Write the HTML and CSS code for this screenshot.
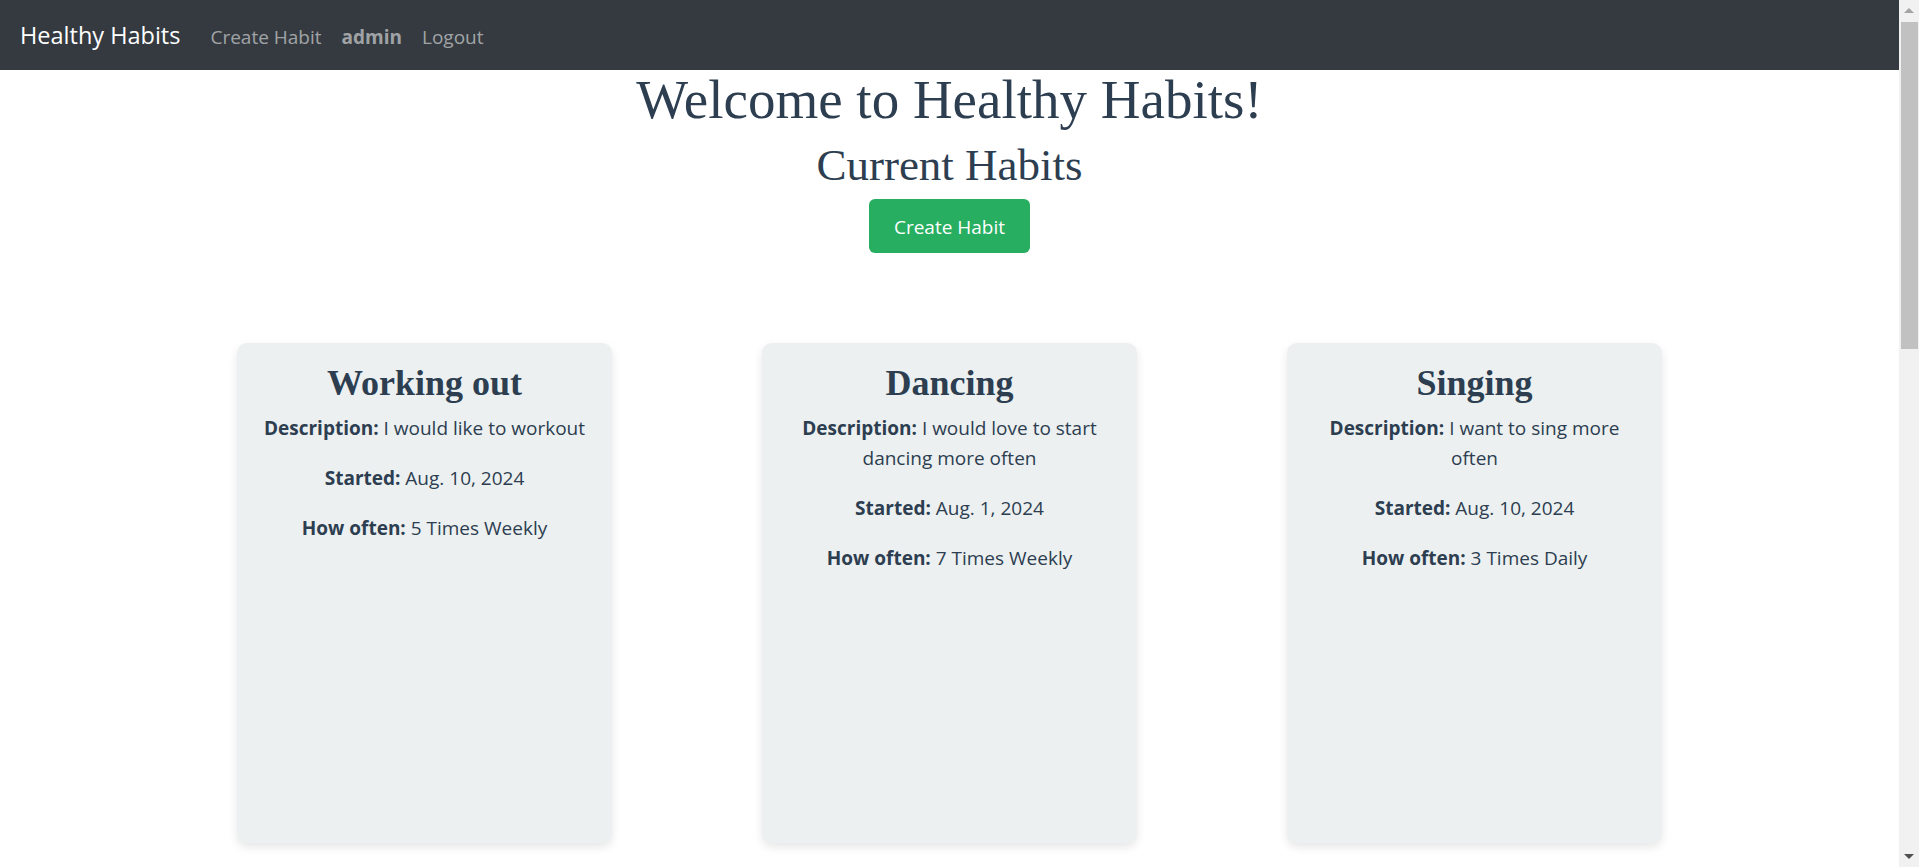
FILE: index.html
```html
<!DOCTYPE html>
<html lang="en">
<head>
<meta charset="utf-8">
<title>Healthy Habits</title>
<link rel="stylesheet" href="styles.css">
</head>
<body>
<nav class="navbar">
  <a class="brand" href="#">Healthy Habits</a>
  <ul class="nav-links">
    <li><a class="nav-link" href="#">Create Habit</a></li>
    <li><span class="nav-link nav-user">admin</span></li>
    <li><a class="nav-link" href="#">Logout</a></li>
  </ul>
</nav>
<main class="main">
  <h1 class="title">Welcome to Healthy Habits!</h1>
  <h2 class="subtitle">Current Habits</h2>
  <a class="btn-create" href="#">Create Habit</a>
  <section class="habit-grid">
    <article class="habit-card">
      <h4 class="habit-name">Working out</h4>
      <p class="habit-line"><strong>Description:</strong> I would like to workout</p>
      <p class="habit-line"><strong>Started:</strong> Aug. 10, 2024</p>
      <p class="habit-line"><strong>How often:</strong> 5 Times Weekly</p>
    </article>
    <article class="habit-card">
      <h4 class="habit-name">Dancing</h4>
      <p class="habit-line"><strong>Description:</strong> I would love to start dancing more often</p>
      <p class="habit-line"><strong>Started:</strong> Aug. 1, 2024</p>
      <p class="habit-line"><strong>How often:</strong> 7 Times Weekly</p>
    </article>
    <article class="habit-card">
      <h4 class="habit-name">Singing</h4>
      <p class="habit-line"><strong>Description:</strong> I want to sing more often</p>
      <p class="habit-line"><strong>Started:</strong> Aug. 10, 2024</p>
      <p class="habit-line"><strong>How often:</strong> 3 Times Daily</p>
    </article>
  </section>
</main>
<div class="fake-scrollbar" aria-hidden="true">
  <span class="sb-arrow sb-up"></span>
  <span class="sb-thumb"></span>
  <span class="sb-arrow sb-down"></span>
</div>
</body>
</html>
```
FILE: styles.css
```css
* { box-sizing: border-box; }
html, body { margin: 0; padding: 0; }
body {
  padding-right: 20px;
  font-family: "Open Sans", "Noto Sans", sans-serif;
  font-size: 19px;
  line-height: 30px;
  color: #2c3e50;
  background: #ffffff;
}
.navbar {
  display: flex;
  align-items: baseline;
  height: 70px;
  padding: 17px 20px 0 20px;
  background: #343a40;
}
.brand {
  color: #ffffff;
  font-size: 23.5px;
  line-height: 36px;
  text-decoration: none;
  margin-right: 20px;
}
.nav-links {
  display: flex;
  align-items: baseline;
  list-style: none;
  margin: 0;
  padding: 0;
}
.nav-link {
  display: block;
  padding: 0 10px;
  color: rgba(255, 255, 255, 0.55);
  text-decoration: none;
}
.nav-user { font-weight: 700; }
.main {
  display: flex;
  flex-direction: column;
  align-items: center;
  padding-bottom: 60px;
}
.title {
  margin: 0;
  font-family: "Liberation Serif", serif;
  font-weight: 400;
  font-size: 55px;
  line-height: 60px;
}
.subtitle {
  margin: 9px 0 0 0;
  font-family: "Liberation Serif", serif;
  font-weight: 400;
  font-size: 45px;
  line-height: 52px;
}
.btn-create {
  margin-top: 8px;
  display: inline-block;
  height: 54px;
  padding: 13px 25px 11px 25px;
  background: #27ae60;
  color: #ffffff;
  border-radius: 6px;
  text-decoration: none;
}
.habit-grid {
  margin-top: 90px;
  display: grid;
  grid-template-columns: repeat(3, 375px);
  column-gap: 150px;
}
.habit-card {
  height: 500px;
  padding: 20px;
  background: #ecf0f1;
  border-radius: 10px;
  box-shadow: 0 4px 10px rgba(0, 0, 0, 0.1);
  text-align: center;
}
.habit-name {
  margin: 0 0 10px 0;
  font-family: "Liberation Serif", serif;
  font-weight: 700;
  font-size: 36px;
  line-height: 40px;
}
.habit-line {
  margin: 0 0 20px 0;
}
.habit-line strong { font-weight: 700; }

/* decorative browser scrollbar, as in the reference capture */
.fake-scrollbar {
  position: fixed;
  top: 0;
  right: 0;
  width: 20px;
  height: 100vh;
  background: #f1f1f1;
}
.sb-thumb {
  position: absolute;
  top: 22px;
  left: 2px;
  width: 17px;
  height: 327px;
  background: #c1c1c1;
}
.sb-arrow {
  position: absolute;
  left: 5px;
  width: 0;
  height: 0;
  border-left: 5px solid transparent;
  border-right: 5px solid transparent;
}
.sb-up {
  top: 8px;
  border-bottom: 5px solid #a3a3a3;
}
.sb-down {
  bottom: 8px;
  border-top: 5px solid #505050;
}
```
